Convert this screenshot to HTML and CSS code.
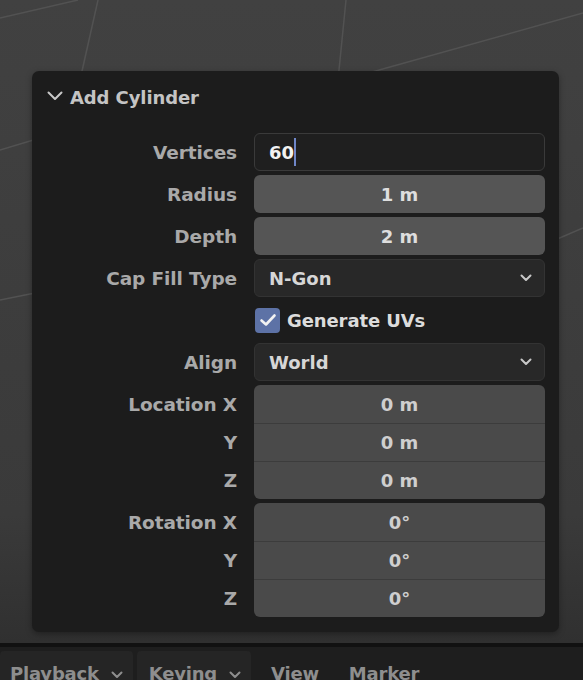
FILE: index.html
```html
<!DOCTYPE html>
<html>
<head>
<meta charset="utf-8">
<link rel="stylesheet" href="styles.css">
</head>
<body>
<div class="viewport">
  <svg class="grid" width="583" height="680" viewBox="0 0 583 680">
    <line x1="0" y1="18" x2="78" y2="0"/>
    <line x1="98" y1="0" x2="80" y2="80"/>
    <line x1="346" y1="0" x2="338" y2="80"/>
    <line x1="583" y1="13" x2="372" y2="72"/>
    <line x1="0" y1="150" x2="40" y2="138"/>
    <line x1="0" y1="300" x2="40" y2="292"/>
    <line x1="555" y1="240" x2="583" y2="228"/>
  </svg>
  <section class="panel">
    <header class="panel-head">
      <svg class="chev" width="16" height="10" viewBox="0 0 16 10"><path d="M1.5 1.5 L8 8 L14.5 1.5"/></svg>
      <span>Add Cylinder</span>
    </header>
    <div class="rows">
      <div class="row">
        <label class="lbl">Vertices</label>
        <div class="field text"><span>60</span><i class="caret"></i></div>
      </div>
      <div class="row">
        <label class="lbl">Radius</label>
        <div class="field num">1 m</div>
      </div>
      <div class="row">
        <label class="lbl">Depth</label>
        <div class="field num">2 m</div>
      </div>
      <div class="row">
        <label class="lbl">Cap Fill Type</label>
        <div class="field menu"><span>N-Gon</span><svg class="dd" width="12" height="8" viewBox="0 0 12 8"><path d="M1.5 1.5 L6 6 L10.5 1.5"/></svg></div>
      </div>
      <div class="row">
        <span class="lbl"></span>
        <div class="check"><span class="box"><svg width="18" height="14" viewBox="0 0 18 14"><path d="M2.5 7.5 L7 11.5 L15.5 2.5"/></svg></span><span>Generate UVs</span></div>
      </div>
      <div class="row">
        <label class="lbl">Align</label>
        <div class="field menu"><span>World</span><svg class="dd" width="12" height="8" viewBox="0 0 12 8"><path d="M1.5 1.5 L6 6 L10.5 1.5"/></svg></div>
      </div>
      <div class="group">
        <div class="row"><label class="lbl">Location X</label><div class="field gnum">0 m</div></div>
        <div class="row"><label class="lbl">Y</label><div class="field gnum">0 m</div></div>
        <div class="row"><label class="lbl">Z</label><div class="field gnum">0 m</div></div>
      </div>
      <div class="group">
        <div class="row"><label class="lbl">Rotation X</label><div class="field gnum">0°</div></div>
        <div class="row"><label class="lbl">Y</label><div class="field gnum">0°</div></div>
        <div class="row"><label class="lbl">Z</label><div class="field gnum">0°</div></div>
      </div>
    </div>
  </section>
</div>
<footer class="bar">
  <div class="menu-btn boxed">Playback <svg class="dd" width="12" height="8" viewBox="0 0 12 8"><path d="M1.5 1.5 L6 6 L10.5 1.5"/></svg></div>
  <div class="menu-btn boxed">Keying <svg class="dd" width="12" height="8" viewBox="0 0 12 8"><path d="M1.5 1.5 L6 6 L10.5 1.5"/></svg></div>
  <div class="menu-btn">View</div>
  <div class="menu-btn">Marker</div>
</footer>
</body>
</html>
```

FILE: styles.css
```css
* { box-sizing: border-box; }
html, body {
  margin: 0;
  padding: 0;
  width: 583px;
  height: 680px;
  overflow: hidden;
  background: #3e3e3e;
  font-family: "DejaVu Sans", "Liberation Sans", sans-serif;
  font-weight: bold;
}
.viewport {
  position: relative;
  height: 647px;
  padding: 71px 24px 0 32px;
  background: linear-gradient(#414141, #3a3a3a 80%, #303030);
  border-bottom: 4px solid #111;
}
.grid {
  position: absolute;
  left: 0;
  top: 0;
}
.grid line {
  stroke: #525252;
  stroke-width: 1.5;
}
.panel {
  position: relative;
  width: 527px;
  height: 561px;
  background: #1c1c1c;
  border-radius: 7px;
  box-shadow: 0 2px 6px rgba(0,0,0,0.35);
}
.panel-head {
  height: 52px;
  display: flex;
  align-items: center;
  padding: 0 0 0 15px;
  color: #c4c4c4;
  font-size: 18px;
  letter-spacing: -0.1px;
}
.chev {
  margin-right: 7px;
  margin-top: -2px;
}
.chev path, .dd path {
  fill: none;
  stroke: #c8c8c8;
  stroke-width: 2;
  stroke-linecap: round;
  stroke-linejoin: round;
}
.rows {
  padding: 10px 14px 0 0;
  display: flex;
  flex-direction: column;
  gap: 4px;
}
.row {
  display: flex;
  align-items: center;
  height: 38px;
  gap: 17px;
}
.lbl {
  width: 205px;
  flex: none;
  text-align: right;
  color: #a9a9a9;
  font-size: 18.5px;
  letter-spacing: -0.1px;
}
.field {
  flex: 1;
  height: 38px;
  border-radius: 6px;
  display: flex;
  align-items: center;
  font-size: 18px;
  color: #dcdcdc;
}
.text {
  background: #1f1f1f;
  border: 1px solid #3a3a3a;
  padding-left: 14px;
  color: #f2f2f2;
}
.caret {
  display: inline-block;
  width: 2px;
  height: 28px;
  background: #6f86c8;
}
.num {
  background: #555555;
  justify-content: center;
  color: #dedede;
}
.menu {
  background: #282828;
  border: 1px solid #333;
  padding: 0 12px 0 14px;
  justify-content: space-between;
  color: #d6d6d6;
}
.check {
  display: flex;
  align-items: center;
  gap: 7px;
  color: #dcdcdc;
  font-size: 18px;
  margin-left: 1px;
  letter-spacing: -0.1px;
}
.box {
  width: 25px;
  height: 25px;
  border-radius: 4px;
  background: #5d72a6;
  display: flex;
  align-items: center;
  justify-content: center;
}
.box path {
  fill: none;
  stroke: #f2f2f2;
  stroke-width: 2.6;
  stroke-linecap: round;
  stroke-linejoin: round;
}
.group {
  display: flex;
  flex-direction: column;
}
.gnum {
  background: #4a4a4a;
  justify-content: center;
  border-radius: 0;
  color: #cfcfcf;
  border-top: 1px solid #3c3c3c;
}
.group .row:first-child .gnum {
  border-radius: 6px 6px 0 0;
  border-top: none;
}
.group .row:last-child .gnum {
  border-radius: 0 0 6px 6px;
}
.bar {
  height: 33px;
  background: #1e1e1e;
  display: flex;
  align-items: flex-end;
  gap: 4px;
}
.menu-btn {
  height: 29px;
  display: flex;
  align-items: flex-start;
  padding: 12px 10px 0 10px;
  color: #8e8e8e;
  font-size: 18px;
  letter-spacing: -0.2px;
  gap: 12px;
  white-space: nowrap;
}
.menu-btn.boxed {
  background: #252525;
  border-radius: 4px 4px 0 0;
}
.menu-btn .dd {
  margin-top: 8px;
}
.menu-btn .dd path {
  stroke: #8e8e8e;
}
.menu-btn:nth-child(2) { padding-left: 12px; }
.menu-btn:nth-child(3) { margin-left: 6px; }
.menu-btn:nth-child(4) { margin-left: 6px; }
```
